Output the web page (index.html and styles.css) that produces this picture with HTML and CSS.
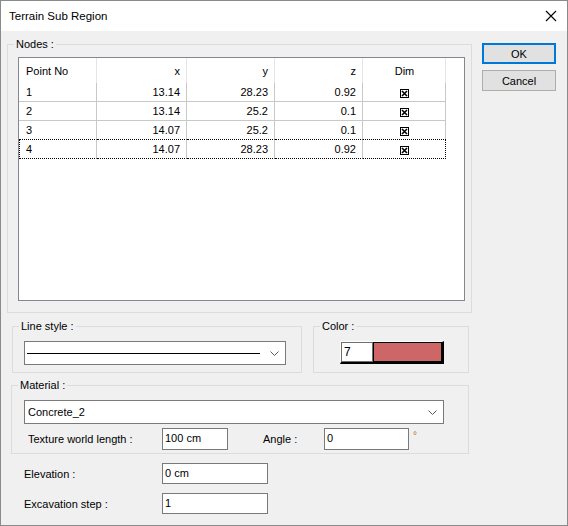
FILE: index.html
```html
<!DOCTYPE html>
<html>
  <head>
    <title>Terrain Sub Region</title>
    <link rel="stylesheet" href="styles.css">
  </head>
  <body>
    <div class="window">
      <div class="titlebar">
        <span class="title">Terrain Sub Region</span>
        <svg class="close" width="12" height="12" viewBox="0 0 12 12">
          <path d="M1 1L11 11M11 1L1 11" stroke="#000" stroke-width="1.1" fill="none" />
        </svg>
      </div>

      <div class="client">
        <div class="main">
          <fieldset class="group nodes">
            <legend>Nodes :</legend>
            <div class="listview">
              <table>
                <colgroup>
                  <col style="width: 78px" />
                  <col style="width: 90px" />
                  <col style="width: 88px" />
                  <col style="width: 88px" />
                  <col style="width: 83px" />
                </colgroup>
                <thead>
                  <tr>
                    <th>Point No</th>
                    <th class="num">x</th>
                    <th class="num">y</th>
                    <th class="num">z</th>
                    <th class="mid">Dim</th>
                  </tr>
                </thead>
                <tbody id="nodeRows"></tbody>
              </table>
            </div>
          </fieldset>

          <div class="pair">
            <fieldset class="group linestyle">
              <legend>Line style :</legend>
              <div class="combo line-combo">
                <span class="line-sample"></span>
                <svg class="chev" width="9" height="5" viewBox="0 0 9 5">
                  <path d="M0.5 0.5L4.5 4.5L8.5 0.5" stroke="#5a5a5a" fill="none" />
                </svg>
              </div>
            </fieldset>
            <fieldset class="group color">
              <legend>Color :</legend>
              <div class="swatch">
                <span class="swatch-num">7</span>
                <span class="swatch-fill"></span>
              </div>
            </fieldset>
          </div>

          <fieldset class="group material">
            <legend>Material :</legend>
            <div class="combo material-combo">
              <span class="combo-text">Concrete_2</span>
              <svg class="chev" width="9" height="5" viewBox="0 0 9 5">
                <path d="M0.5 0.5L4.5 4.5L8.5 0.5" stroke="#5a5a5a" fill="none" />
              </svg>
            </div>
            <div class="texture-row">
              <span class="texture-label">Texture world length :</span>
              <span class="edit texture-edit">100 cm</span>
              <span class="angle-label">Angle :</span>
              <span class="edit angle-edit">0</span>
              <span class="deg">°</span>
            </div>
          </fieldset>

          <div class="field-row first">
            <span class="field-label">Elevation :</span>
            <span class="edit wide-edit">0 cm</span>
          </div>
          <div class="field-row">
            <span class="field-label">Excavation step :</span>
            <span class="edit wide-edit">1</span>
          </div>
        </div>

        <div class="side">
          <button class="btn default">OK</button>
          <button class="btn">Cancel</button>
        </div>
      </div>
    </div>

    <script>
      const nodes = [
        ["1", "13.14", "28.23", "0.92"],
        ["2", "13.14", "25.2", "0.1"],
        ["3", "14.07", "25.2", "0.1"],
        ["4", "14.07", "28.23", "0.92"],
      ];

      const checkBox = `<svg class="dim" width="9" height="9" viewBox="0 0 9 9">
          <rect x="0.5" y="0.5" width="8" height="8" fill="#fff" stroke="#000" />
          <path d="M2 2L7 7M7 2L2 7" stroke="#000" stroke-width="1.6" />
        </svg>`;

      const tbody = document.getElementById("nodeRows");
      nodes.forEach((n, i) => {
        const row = tbody.insertRow();
        if (i === nodes.length - 1) row.className = "focus";
        row.innerHTML = `
          <td>${n[0]}</td>
          <td class="num">${n[1]}</td>
          <td class="num">${n[2]}</td>
          <td class="num">${n[3]}</td>
          <td class="mid">${checkBox}</td>
        `;
      });
    </script>
  </body>
</html>
```

FILE: styles.css
```css
html,
body {
  margin: 0;
  padding: 0;
}
body {
  font-family: "Liberation Sans", Arial, sans-serif;
  font-size: 11px;
  color: #000;
}
.window {
  width: 568px;
  height: 526px;
  box-sizing: border-box;
  border: 1px solid #8a8a8a;
  background-color: #f0f0f0;
  overflow: hidden;
}
.titlebar {
  height: 30px;
  background-color: #fff;
  display: flex;
  align-items: center;
  justify-content: space-between;
  padding: 0 10px 0 8px;
}
.title {
  font-size: 11.5px;
}
.close {
  display: block;
}
.client {
  display: flex;
}
.main {
  width: 471px;
}
.side {
  margin-left: 10px;
  padding-top: 12px;
  display: flex;
  flex-direction: column;
  gap: 6px;
}
.btn {
  width: 74px;
  height: 21px;
  box-sizing: border-box;
  border: 1px solid #adadad;
  background-color: #e1e1e1;
  font-family: inherit;
  font-size: 11px;
  color: #000;
  padding: 0;
}
.btn.default {
  border: 2px solid #0078d7;
}

/* group boxes */
.group {
  margin: 0;
  padding: 0;
  border: 1px solid #dcdcdc;
  min-inline-size: 0;
}
.group legend {
  margin-left: 6px;
  padding: 0 2px;
  line-height: 14px;
}
.nodes {
  margin: 6px 0 0 6px;
  width: 465px;
  box-sizing: border-box;
}
.listview {
  margin: 6px 6px 11px 10px;
  height: 244px;
  box-sizing: border-box;
  border: 1px solid #828790;
  background-color: #fff;
}
.listview table {
  border-collapse: separate;
  border-spacing: 0;
  table-layout: fixed;
  width: 427px;
}
.listview th {
  height: 25px;
  padding: 0 6px 0 7px;
  font-weight: normal;
  text-align: left;
  border-right: 1px solid #e5e5e5;
}
.listview td {
  line-height: 18px;
  padding: 0 6px 0 7px;
  border-right: 1px solid #c8c8c8;
}
.listview tbody tr + tr td {
  border-top: 1px solid #c8c8c8;
}
.listview tbody tr.focus td {
  border-top: 1px dotted #000;
  border-bottom: 1px dotted #000;
}
.listview tbody tr.focus td:first-child {
  border-left: 1px dotted #000;
  padding-left: 6px;
}
.listview tbody tr.focus td:last-child {
  border-right: 1px dotted #000;
}
.listview .num {
  text-align: right;
}
.listview .mid {
  text-align: center;
}
.dim {
  vertical-align: middle;
}

.pair {
  display: flex;
  gap: 11px;
  margin: 6px 0 0 11px;
}
.linestyle {
  width: 290px;
  box-sizing: border-box;
}
.color {
  width: 156px;
  box-sizing: border-box;
}
.combo {
  height: 24px;
  box-sizing: border-box;
  border: 1px solid #7a7a7a;
  background-color: #fff;
  display: flex;
  align-items: center;
  padding: 0 6px 0 2px;
}
.line-combo {
  margin: 8px 0 7px 11px;
  width: 262px;
}
.line-sample {
  width: 233px;
  border-top: 1px solid #000;
  margin-top: 1px;
}
.chev {
  margin-left: auto;
}
.swatch {
  margin: 8px 0 0 26px;
  width: 104px;
  height: 23px;
  box-sizing: border-box;
  display: flex;
  border-style: solid;
  border-width: 1px 2px 2px 1px;
  border-color: #fff #000 #000 #fff;
  background-color: #fff;
}
.swatch-num {
  width: 32px;
  box-sizing: border-box;
  border: 1px solid #6d6d6d;
  background-color: #fff;
  font-size: 12px;
  line-height: 18px;
  padding-left: 2px;
}
.swatch-fill {
  flex: 1;
  border: 1px solid #000;
  background-color: #cd6666;
}

.material {
  margin: 5px 0 0 10px;
  width: 458px;
  box-sizing: border-box;
}
.material-combo {
  margin: 8px 0 0 12px;
  width: 420px;
}
.combo-text {
  padding-left: 1px;
}
.texture-row {
  display: flex;
  align-items: center;
  margin: 4px 0 3px 16px;
}
.texture-label {
  width: 134px;
}
.edit {
  height: 22px;
  box-sizing: border-box;
  border: 1px solid #7a7a7a;
  background-color: #fff;
  padding-left: 2px;
  line-height: 19px;
}
.texture-edit {
  width: 66px;
}
.angle-label {
  margin-left: 35px;
  width: 61px;
}
.angle-edit {
  width: 85px;
}
.deg {
  align-self: flex-start;
  margin-left: 4px;
  margin-top: 2px;
  color: #c06a2a;
  font-size: 10px;
}

.field-row {
  display: flex;
  align-items: center;
  margin: 9px 0 0 23px;
}
.field-label {
  width: 138px;
}
.wide-edit {
  width: 106px;
  height: 21px;
  line-height: 18px;
}
```
